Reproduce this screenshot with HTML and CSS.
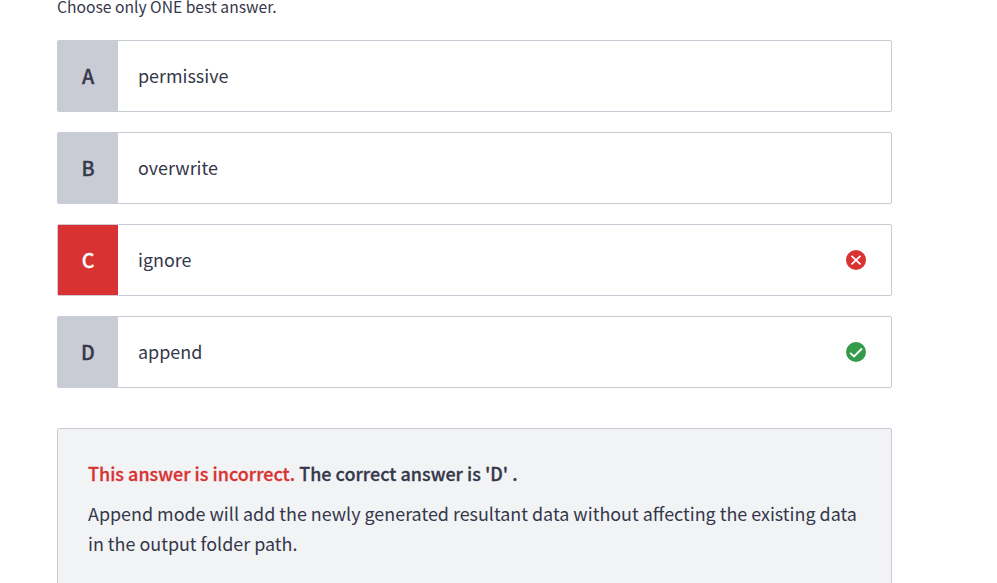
FILE: index.html
```html
<!DOCTYPE html>
<html lang="en">
<head>
<meta charset="utf-8">
<title>Quiz question</title>
<link rel="stylesheet" href="styles.css">
</head>
<body>
<main class="quiz">
  <p class="hint">Choose only ONE best answer.</p>
  <ul class="options">
    <li class="option"><span class="letter">A</span><span class="label">permissive</span></li>
    <li class="option"><span class="letter">B</span><span class="label">overwrite</span></li>
    <li class="option wrong"><span class="letter">C</span><span class="label">ignore</span>
      <svg class="mark" viewBox="0 0 20 20"><circle cx="10" cy="10" r="10" fill="#d93232"/><path d="M5.5 5.8l9 8.6M14.5 5.8l-9 8.6" stroke="#fff" stroke-width="1.7" fill="none"/></svg></li>
    <li class="option"><span class="letter">D</span><span class="label">append</span>
      <svg class="mark" viewBox="0 0 20 20"><circle cx="10" cy="10" r="10" fill="#349b4b"/><path d="M4.2 10.8l3.8 3.7 8-8" stroke="#fff" stroke-width="1.8" fill="none"/></svg></li>
  </ul>
  <section class="result">
    <h2 class="verdict"><span class="bad">This answer is incorrect.</span> The correct answer is 'D' .</h2>
    <p class="explain">Append mode will add the newly generated resultant data without affecting the existing data<br>in the output folder path.</p>
  </section>
</main>
</body>
</html>
```
FILE: styles.css
```css
* { box-sizing: border-box; }
body { margin: 0; height: 583px; overflow: hidden; background: #fff; color: #35374a; font-family: "Noto Sans CJK SC", "Noto Sans", sans-serif; font-size: 17.92px; }
.quiz { width: 835px; margin-left: 57px; }
.hint { margin: 0; height: 40px; font-size: 15.65px; line-height: 14px; white-space: nowrap; }
.options { list-style: none; margin: 0; padding: 0; display: grid; gap: 20px; }
.option { display: flex; align-items: center; height: 72px; border: 1px solid #c9cbd5; border-radius: 2px; padding-right: 25px; }
.letter { width: 60px; height: 70px; line-height: 70px; text-align: center; background: #c9cbd5; font-size: 19.7px; font-weight: 500; -webkit-text-stroke: 0.3px currentColor; }
.wrong .letter { background: #d93232; color: #fff; }
.label { margin-left: 20px; flex: 1; line-height: 30px; padding-bottom: 2px; }
.mark { width: 20px; height: 20px; }
.result { margin-top: 40px; height: 180px; padding: 29px 30px; background: #f1f3f5; border: 1px solid #c9cbd5; border-radius: 2px; white-space: nowrap; }
.verdict { margin: 0 0 10px; font-size: 17.92px; line-height: 30px; font-weight: 500; letter-spacing: 0.04px; -webkit-text-stroke: 0.3px currentColor; }
.bad { color: #d93232; }
.explain { margin: 0; line-height: 30px; }
```
